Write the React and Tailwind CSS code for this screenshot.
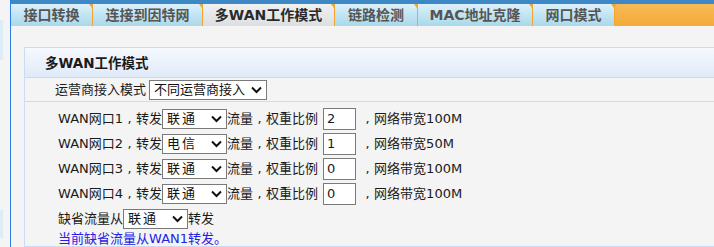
import React from "react";

const font = { fontFamily: '"DejaVu Sans", "Noto Sans CJK SC", sans-serif' };

const tabs = [
  { label: "接口转换", w: "w-[82px]" },
  { label: "连接到因特网", w: "w-[110px]" },
  { label: "多WAN工作模式", w: "w-[132px]", active: true },
  { label: "链路检测", w: "w-[83px]" },
  { label: "MAC地址克隆", w: "w-[115px]" },
  { label: "网口模式", w: "w-[82px]" },
];

const wanRows = [
  { n: 1, isp: "联通", weight: "2", bw: "100M" },
  { n: 2, isp: "电信", weight: "1", bw: "50M" },
  { n: 3, isp: "联通", weight: "0", bw: "100M" },
  { n: 4, isp: "联通", weight: "0", bw: "100M" },
];

// centred full-width comma, as the reference draws it
function Comma() {
  return <span className="inline-block w-[13px] text-center">,</span>;
}

function Chevron() {
  return (
    <svg width="11" height="8" viewBox="0 0 11 8" className="shrink-0">
      <path d="M1 1.5 L5.5 6 L10 1.5" fill="none" stroke="#111" strokeWidth="2" />
    </svg>
  );
}

function Select({ value, width, spaced = true }) {
  return (
    <div
      className={`${width} h-[20px] flex items-center justify-between bg-white border border-[#7a7a7a] pl-[4px] pr-[4px] text-[13px] text-[#111] whitespace-nowrap`}
    >
      <span className={spaced ? "tracking-[2px]" : ""}>{value}</span>
      <Chevron />
    </div>
  );
}

export default function App() {
  return (
    <div style={font} className="w-[714px] h-[247px] overflow-hidden bg-[#f4f4f4] flex">
      <div className="w-[10px] flex flex-col shrink-0">
        <div className="h-[20px]" />
        <div className="w-[3px] h-[40px] bg-[#dcecf8]" />
        <div className="flex-1" />
        <div className="w-[3px] h-[28px] bg-[#dcecf8]" />
        <div className="h-[9px]" />
      </div>
      <div className="flex-1 flex flex-col border-l border-[#2a7fe8]">
        <div className="h-[5px] bg-[#3f88c6]" />
        <div className="h-[25px] flex">
          {tabs.map((t) => (
            <div
              key={t.label}
              className={`${t.w} relative flex items-center justify-center border-r border-[#f3a530] text-[14px] font-bold ${
                t.active
                  ? "bg-gradient-to-b from-[#f0f0f0] to-[#dcdfe2] text-[#2a2a2a]"
                  : "bg-gradient-to-b from-[#dcf1fb] to-[#a9d8ea] text-[#555]"
              }`}
            >
              {t.label}
              <div className="absolute -right-[3px] top-0 w-0 h-0 border-l-[3px] border-r-[3px] border-t-[4px] border-l-transparent border-r-transparent border-t-[#f3a530]" />
            </div>
          ))}
          <div className="flex-1 bg-gradient-to-b from-[#f8ba58] to-[#f6aa36]" />
        </div>
        <div className="flex-1 pl-[13px] pt-[21px]">
          <div className="h-[200px] border border-r-0 border-[#c9dcf2] bg-[#f4f4f4] flex flex-col text-[13px] text-[#1a1a1a]">
            <div className="h-[30px] shrink-0 flex items-center pl-[20px] pt-[2px] bg-gradient-to-b from-[#f6f9fe] to-[#dfeaf8] border-b border-[#c9dcf2] font-bold text-[13.5px] text-[#1a1a1a]">
              多WAN工作模式
            </div>
            <div className="h-[24px] shrink-0 flex items-center pl-[30px] gap-[3px] border-b border-[#c9dcf2]">
              <span>运营商接入模式</span>
              <Select value="不同运营商接入" width="w-[118px]" spaced={false} />
            </div>
            <div className="flex flex-col pl-[33px] pt-[4px]">
              {wanRows.map((r) => (
                <div key={r.n} className="h-[25px] flex items-center">
                  <span>
                    WAN网口{r.n}
                    <Comma />
                    转发
                  </span>
                  <Select value={r.isp} width="w-[65px]" />
                  <span>
                    流量
                    <Comma />
                    权重比例
                  </span>
                  <div className="ml-[5px] w-[33px] h-[22px] bg-white border border-[#7a7a7a] pl-[3px] flex items-center text-[13px]">
                    {r.weight}
                  </div>
                  <span className="ml-[5px]">
                    <Comma />
                    网络带宽{r.bw}
                  </span>
                </div>
              ))}
              <div className="h-[25px] flex items-center">
                <span>缺省流量从</span>
                <Select value="联通" width="w-[65px]" />
                <span>转发</span>
              </div>
              <div className="h-[16px] flex items-center text-[#2222e6]">当前缺省流量从WAN1转发。</div>
            </div>
          </div>
        </div>
      </div>
    </div>
  );
}
